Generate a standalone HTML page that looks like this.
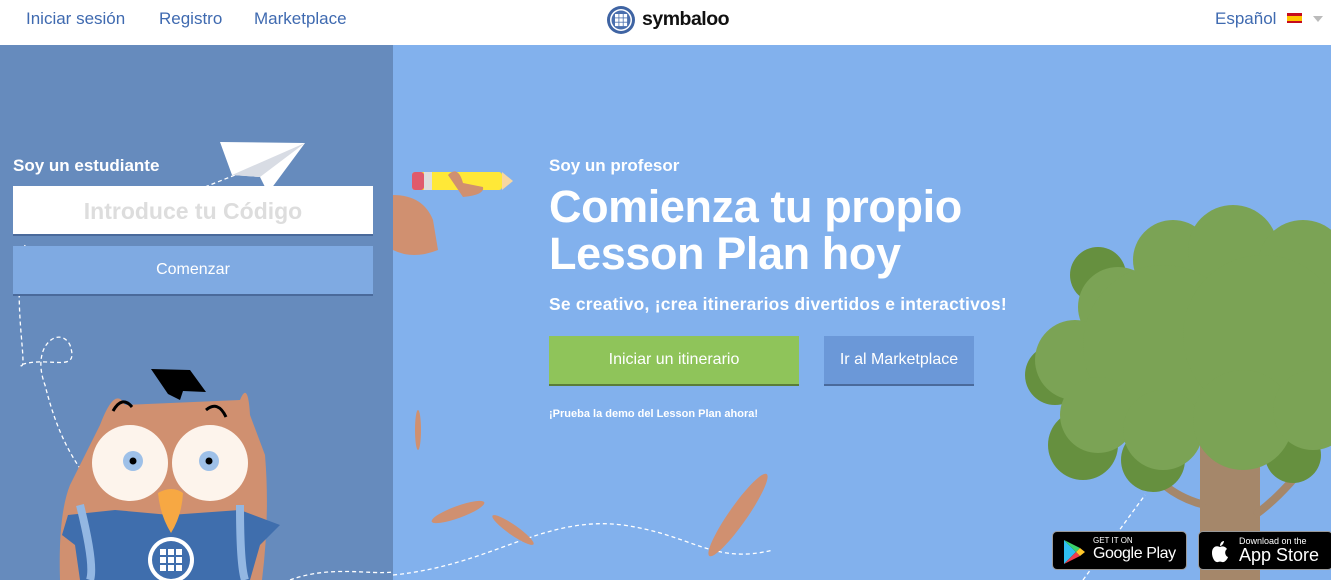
<!DOCTYPE html>
<html><head><meta charset="utf-8"><style>
*{margin:0;padding:0;box-sizing:border-box}
body{width:1331px;height:580px;overflow:hidden;font-family:"Liberation Sans",Arial,sans-serif;background:#82b1ed;position:relative}
.hdr{position:absolute;left:0;top:0;width:1331px;height:45px;background:#fff}
.hdr a{position:absolute;top:9px;font-size:17px;color:#3f6ab0;text-decoration:none}
.left{position:absolute;left:0;top:45px;width:393px;height:535px;background:#668bbd;overflow:hidden}
.right{position:absolute;left:393px;top:45px;width:938px;height:535px;background:#82b1ed;overflow:hidden}
.t{position:absolute;color:#fff;font-weight:bold}
</style></head><body>
<div class="hdr">
<a style="left:26px">Iniciar sesión</a>
<a style="left:159px">Registro</a>
<a style="left:254px">Marketplace</a>
<svg style="position:absolute;left:606px;top:5px" width="30" height="30" viewBox="0 0 30 30"><circle cx="15" cy="15" r="14" fill="#3f64a3"/><circle cx="15" cy="15" r="11" fill="#fff"/><circle cx="15" cy="15" r="9.5" fill="#4a6fae"/><g fill="#fff"><rect x="9" y="9" width="3.5" height="3.5"/><rect x="13.3" y="9" width="3.5" height="3.5"/><rect x="17.6" y="9" width="3.5" height="3.5"/><rect x="9" y="13.3" width="3.5" height="3.5"/><rect x="13.3" y="13.3" width="3.5" height="3.5"/><rect x="17.6" y="13.3" width="3.5" height="3.5"/><rect x="9" y="17.6" width="3.5" height="3.5"/><rect x="13.3" y="17.6" width="3.5" height="3.5"/><rect x="17.6" y="17.6" width="3.5" height="3.5"/></g></svg>
<span style="position:absolute;left:642px;top:8px;font-size:19.5px;font-weight:bold;color:#111;letter-spacing:-0.5px">symbaloo</span>
<a style="left:1215px">Español</a>
<div style="position:absolute;left:1287px;top:13px;width:15px;height:10px;background:#c60b1e"><div style="margin-top:2.5px;height:5px;background:#ffc400"></div></div>
<div style="position:absolute;left:1313px;top:16px;border:5px solid transparent;border-top:6px solid #bbb"></div>
</div>

<div class="left">
<svg width="393" height="535" style="position:absolute;left:0;top:0">
<path d="M205 142 L240 128 M25 200 C10 250 30 330 20 320 C50 310 80 330 70 300 C60 280 30 300 45 340 C60 400 80 430 120 470 M290 535 C330 520 370 530 393 527" stroke="#fff" stroke-width="1.3" stroke-dasharray="4 3" fill="none"/>
<polygon points="220,97 305,98 268,148 260,132 232,130" fill="#fff"/>
<polygon points="232,130 305,98 260,132" fill="#d8dce4"/>
<path d="M100 380 Q115 340 125 360 L240 355 Q248 335 250 370 L265 410 Q270 470 262 535 L60 535 Q58 470 70 440 Z" fill="#d09070"/>
<path d="M68 470 L115 465 L170 470 L240 465 L280 480 L260 500 L250 535 L80 535 L75 500 L62 490Z" fill="#3f6ead"/>
<path d="M80 460 Q95 520 90 535 M240 460 Q240 520 245 535" stroke="#93b7e2" stroke-width="8" fill="none"/>
<circle cx="130" cy="418" r="38" fill="#fdf4ec"/>
<circle cx="210" cy="418" r="38" fill="#fdf4ec"/>
<circle cx="133" cy="416" r="10" fill="#9ec0e8"/><circle cx="133" cy="416" r="3.5" fill="#000"/>
<circle cx="209" cy="416" r="10" fill="#9ec0e8"/><circle cx="209" cy="416" r="3.5" fill="#000"/>
<path d="M158 448 Q172 440 183 448 Q182 470 171 488 Q160 470 158 448Z" fill="#f7a843"/>
<polygon points="151,324 190,325 206,347 183,346 180,355 168,349" fill="#000"/>
<path d="M113 366 Q122 350 132 362 M206 365 Q218 355 226 372" stroke="#000" stroke-width="3" fill="none"/>
<circle cx="171" cy="515" r="23" fill="#fff"/><circle cx="171" cy="515" r="19" fill="#3f6ead"/>
<g fill="#fff"><rect x="160" y="504" width="6" height="6"/><rect x="168" y="504" width="6" height="6"/><rect x="176" y="504" width="6" height="6"/><rect x="160" y="512" width="6" height="6"/><rect x="168" y="512" width="6" height="6"/><rect x="176" y="512" width="6" height="6"/><rect x="160" y="520" width="6" height="6"/><rect x="168" y="520" width="6" height="6"/><rect x="176" y="520" width="6" height="6"/></g>
</svg>
<div class="t" style="left:13px;top:111px;font-size:17px">Soy un estudiante</div>
<div style="position:absolute;left:13px;top:141px;width:360px;height:50px;background:#fff;border-bottom:2px solid #4a6a9b;text-align:center;font-size:23px;font-weight:bold;color:#ddd;line-height:50px">Introduce tu Código</div>
<div style="position:absolute;left:13px;top:201px;width:360px;height:50px;background:#7faae2;border-bottom:2px solid #4a6a9b;text-align:center;font-size:16px;color:#fff;line-height:48px">Comenzar</div>
</div>

<div class="right">
<svg width="938" height="535" style="position:absolute;left:0;top:0">
<path d="M0 150 Q30 150 40 175 L45 205 Q20 215 0 205Z" fill="#d09070"/>
<rect x="19" y="127" width="90" height="18" rx="3" fill="#ffe837"/>
<rect x="19" y="127" width="12" height="18" rx="3" fill="#e05a6c"/>
<rect x="31" y="127" width="8" height="18" fill="#ddd"/>
<polygon points="109,127 120,136 109,145" fill="#f7d7a0"/>
<path d="M55 130 Q65 120 70 138 L90 142 Q92 150 70 152Z" fill="#d09070"/>
<path d="M0 530 C100 520 150 470 230 480 C300 490 320 520 380 505" stroke="#fff" stroke-width="1.3" stroke-dasharray="4 3" fill="none"/>
<path d="M690 535 L752 450" stroke="#fff" stroke-width="1.3" stroke-dasharray="4 3" fill="none"/>
<g fill="#d09070"><ellipse cx="25" cy="385" rx="3" ry="20"/><ellipse cx="65" cy="467" rx="28" ry="6" transform="rotate(-20 65 467)"/><ellipse cx="120" cy="485" rx="25" ry="5" transform="rotate(35 120 485)"/><ellipse cx="345" cy="470" rx="50" ry="9" transform="rotate(-55 345 470)"/></g>
<rect x="807" y="380" width="60" height="155" fill="#a5876a"/>
<path d="M745 410 Q770 450 812 460 M920 410 Q890 450 862 470" stroke="#a5876a" stroke-width="8" fill="none"/>
<g fill="#66903f"><circle cx="705" cy="230" r="28"/><circle cx="662" cy="330" r="30"/><circle cx="690" cy="400" r="35"/><circle cx="760" cy="415" r="32"/><circle cx="900" cy="410" r="28"/></g>
<g fill="#7ba355"><circle cx="780" cy="215" r="40"/><circle cx="840" cy="205" r="45"/><circle cx="910" cy="220" r="45"/><circle cx="725" cy="262" r="40"/><circle cx="682" cy="315" r="40"/><circle cx="770" cy="300" r="80"/><circle cx="870" cy="290" r="80"/><circle cx="705" cy="370" r="38"/><circle cx="770" cy="385" r="40"/><circle cx="850" cy="375" r="50"/><circle cx="920" cy="365" r="40"/></g>
</svg>
<div class="t" style="left:156px;top:111px;font-size:17px">Soy un profesor</div>
<div class="t" style="left:156px;top:138px;font-size:45px;line-height:47px;letter-spacing:-0.4px">Comienza tu propio<br>Lesson Plan hoy</div>
<div class="t" style="left:156px;top:249px;font-size:17.4px;letter-spacing:0.25px">Se creativo, ¡crea itinerarios divertidos e interactivos!</div>
<div style="position:absolute;left:156px;top:291px;width:250px;height:50px;background:#8fc45a;border-bottom:2px solid #5a7d38;color:#fff;font-size:16px;text-align:center;line-height:48px">Iniciar un itinerario</div>
<div style="position:absolute;left:431px;top:291px;width:150px;height:50px;background:#6b98d8;border-bottom:2px solid #4a6a9b;color:#fff;font-size:16px;text-align:center;line-height:48px">Ir al Marketplace</div>
<div class="t" style="left:156px;top:363px;font-size:11px">¡Prueba la demo del Lesson Plan ahora!</div>
<div style="position:absolute;left:659px;top:486px;width:135px;height:39px;background:#000;border:1px solid #999;border-radius:5px;color:#fff">
<svg style="position:absolute;left:9px;top:7px" width="24" height="26" viewBox="0 0 24 26"><polygon points="2,1 14,13 2,25" fill="#2fbff1"/><polygon points="2,1 18,9 14,13" fill="#3ad26c"/><polygon points="2,25 18,17 14,13" fill="#f03c4c"/><polygon points="18,9 23,13 18,17 14,13" fill="#ffc72a"/></svg>
<div style="position:absolute;left:40px;top:4px;font-size:8px">GET IT ON</div>
<div style="position:absolute;left:40px;top:13px;font-size:16px;letter-spacing:-0.4px">Google Play</div></div>
<div style="position:absolute;left:805px;top:486px;width:135px;height:39px;background:#000;border:1px solid #999;border-radius:5px;color:#fff">
<svg style="position:absolute;left:11px;top:8px" width="20" height="24" viewBox="0 0 20 24"><path d="M10 7 C6 5 2 7 2 13 C2 18 5 23 8 22 C9 21.5 11 21.5 12 22 C15 23 18 18 18 17 C15 16 14 11 17 9 C15 6 12 6 10 7Z M10 6 C10 3 12 1 14 1 C14 3 12 6 10 6Z" fill="#fff"/></svg>
<div style="position:absolute;left:40px;top:4px;font-size:9px">Download on the</div>
<div style="position:absolute;left:40px;top:13px;font-size:18px">App Store</div></div>
</div>
</body></html>
